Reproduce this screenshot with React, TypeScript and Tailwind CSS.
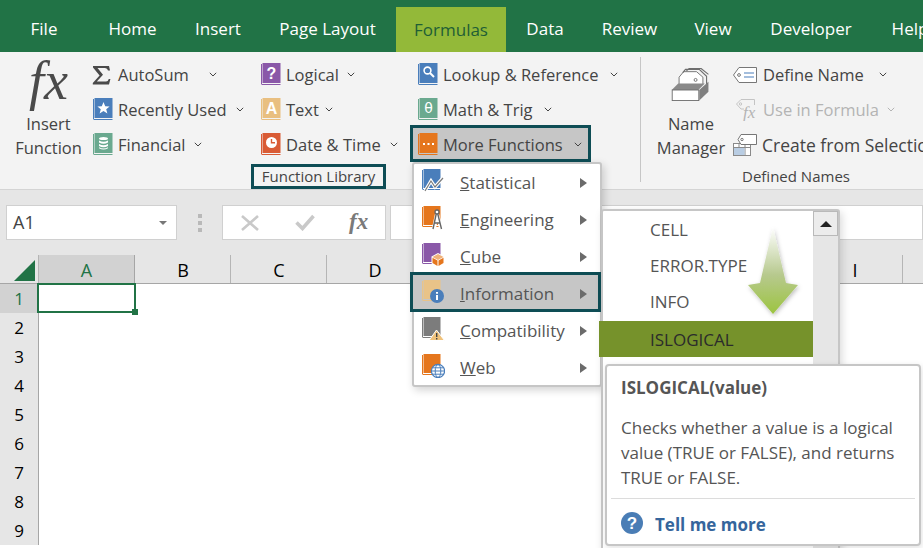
import React from 'react';

const TEAL = 'border-[#0e4d55]';

const tabs = [
  { label: 'File', w: 'w-[88px]' },
  { label: 'Home', w: 'w-[89px]' },
  { label: 'Insert', w: 'w-[82px]' },
  { label: 'Page Layout', w: 'w-[137px]' },
  { label: 'Formulas', w: 'w-[110px]', active: true },
  { label: 'Data', w: 'w-[78px]' },
  { label: 'Review', w: 'w-[91px]' },
  { label: 'View', w: 'w-[76px]' },
  { label: 'Developer', w: 'w-[120px]' },
  { label: 'Help', w: 'w-[78px]' },
];

const columns = ['B', 'C', 'D', 'E', 'F', 'G', 'H', 'I', 'J'];
const rows = [2, 3, 4, 5, 6, 7, 8, 9];

function Chevron({ className = '' }: { className?: string }) {
  return (
    <svg width="8" height="5" viewBox="0 0 8 5" className={`shrink-0 ${className}`}>
      <path d="M.8 .8 L4 4 L7.2 .8" fill="none" stroke="currentColor" strokeWidth="1" />
    </svg>
  );
}

// little book used by the function category buttons
function Book({ color, children }: { color: string; children?: React.ReactNode }) {
  return (
    <svg width="21" height="23" viewBox="0 0 21 23" className="shrink-0">
      <path d="M1.5 1 V21" stroke={color} strokeWidth="1" fill="none" />
      <rect x="2.5" y="0" width="18" height="20" fill={color} />
      <path d="M1.5 21.5 H20.5" stroke={color} strokeWidth="1" fill="none" />
      {children}
    </svg>
  );
}

function SigmaIcon() {
  return (
    <svg width="19" height="20" viewBox="0 0 19 20" className="shrink-0">
      <path d="M1 1 H17 L18 5.5 H16 Q15.5 3 13 3 H5.5 L11 9.8 L4.8 16.5 H14 Q16 16.5 16.8 14 H18.4 L17 19.5 H0.8 V18 L7.6 10.5 L1 2.4 Z" fill="#4a4a4a" />
    </svg>
  );
}

const iconText = 'font-[Liberation_Sans,sans-serif] font-bold';

const icons: Record<string, React.ReactNode> = {
  recent: (
    <Book color="#4a7ebb">
      <path d="M11.5 4 L13.2 8.2 L17.6 8.4 L14.2 11.2 L15.4 15.4 L11.5 13 L7.6 15.4 L8.8 11.2 L5.4 8.4 L9.8 8.2 Z" fill="#fff" />
    </Book>
  ),
  financial: (
    <Book color="#6aa98f">
      <ellipse cx="11.5" cy="5.5" rx="4.5" ry="1.6" fill="#fff" />
      <path d="M7 7.5 Q11.5 10 16 7.5 V9.5 Q11.5 12 7 9.5 Z M7 11 Q11.5 13.5 16 11 V13 Q11.5 15.5 7 13 Z M7 14.2 Q11.5 16.7 16 14.2 V15.2 Q11.5 17.7 7 15.2 Z" fill="#fff" />
    </Book>
  ),
  logical: (
    <Book color="#8a58a8">
      <text x="11.5" y="16" textAnchor="middle" fontSize="16" fill="#fff" className={iconText}>?</text>
    </Book>
  ),
  text: (
    <Book color="#e9bf80">
      <text x="11.5" y="16" textAnchor="middle" fontSize="16" fill="#fff" className={iconText}>A</text>
    </Book>
  ),
  date: (
    <Book color="#d95b35">
      <circle cx="11.5" cy="9.5" r="5.5" fill="#fff" />
      <path d="M11.5 6 V9.8 H15" fill="none" stroke="#d95b35" strokeWidth="1.4" />
    </Book>
  ),
  lookup: (
    <Book color="#4a7ebb">
      <circle cx="10.5" cy="7.5" r="3.4" fill="none" stroke="#fff" strokeWidth="1.6" />
      <path d="M13 10 L17 14" stroke="#fff" strokeWidth="2" />
    </Book>
  ),
  math: (
    <Book color="#6aa98f">
      <text x="11.5" y="15" textAnchor="middle" fontSize="14" fill="#fff" className="font-[DejaVu_Sans,sans-serif]">θ</text>
    </Book>
  ),
  more: (
    <Book color="#e5761d">
      <path d="M6 10 H8 V12 H6 Z M10.5 10 H12.5 V12 H10.5 Z M15 10 H17 V12 H15 Z" fill="#fff" />
    </Book>
  ),
};

function MenuIcon({ kind }: { kind: string }) {
  const color: Record<string, string> = {
    statistical: '#4a7ebb',
    engineering: '#e5761d',
    cube: '#8a58a8',
    information: '#e9c388',
    compatibility: '#7c7c7c',
    web: '#e5761d',
  };
  const c = color[kind];
  return (
    <svg width="24" height="24" viewBox="0 0 24 24" className="mt-[-3px] shrink-0">
      <path d="M1.5 1 V20" stroke={c} strokeWidth="1" fill="none" />
      <rect x="2.5" y="0" width="17" height="19" fill={c} />
      <path d="M1.5 20.5 H19" stroke={c} strokeWidth="1" fill="none" />
      {kind === 'statistical' && (
        <g fill="none">
          <path d="M4 22 L10 12 L14 18 L22 9" stroke="#fff" strokeWidth="3.4" />
          <path d="M4 22 L10 12 L14 18 L22 9" stroke="#7b7b7b" strokeWidth="1.2" />
        </g>
      )}
      {kind === 'engineering' && (
        <g fill="none">
          <path d="M13 22 L16 8 L20 22" stroke="#fff" strokeWidth="4" />
          <circle cx="16" cy="6" r="2" fill="#fff" stroke="#666" strokeWidth="1.3" />
          <path d="M15.2 8 L12 23 M16.8 8 L20.5 23 M13 17 H19.5" stroke="#666" strokeWidth="1.4" />
        </g>
      )}
      {kind === 'cube' && (
        <g>
          <path d="M17 10 L23.5 13.5 V20.5 L17 24 L10.5 20.5 V13.5 Z" fill="#fff" />
          <path d="M17 11 L22.5 14 L17 17 L11.5 14 Z" fill="#f0b27a" />
          <path d="M11.5 14.8 L16.5 17.6 V23 L11.5 20 Z M22.5 14.8 L17.5 17.6 V23 L22.5 20 Z" fill="#e5761d" />
        </g>
      )}
      {kind === 'information' && (
        <g>
          <circle cx="16" cy="16" r="7" fill="#4a7ebb" />
          <path d="M15 15 H17 V20 H15 Z M15 12 H17 V13.8 H15 Z" fill="#fff" />
        </g>
      )}
      {kind === 'compatibility' && (
        <g>
          <path d="M15.5 13 L23.5 23.5 H8 Z" fill="#f0c27b" stroke="#fff" strokeWidth="1" />
          <path d="M15 16 H16.4 V20 H15 Z M15 21 H16.4 V22.4 H15 Z" fill="#444" />
        </g>
      )}
      {kind === 'web' && (
        <g>
          <circle cx="17" cy="17" r="6.6" fill="#fff" stroke="#4a7ebb" strokeWidth="1.2" />
          <ellipse cx="17" cy="17" rx="2.8" ry="6.4" fill="none" stroke="#4a7ebb" strokeWidth="1" />
          <path d="M10.6 17 H23.4 M11.6 13.8 H22.4 M11.6 20.2 H22.4" stroke="#4a7ebb" strokeWidth="1" />
        </g>
      )}
    </svg>
  );
}

function RibbonRow({ icon, label, gap }: { icon: React.ReactNode; label: string; gap: string }) {
  return (
    <div className="flex h-[35px] items-center whitespace-nowrap">
      <span className="flex w-[26px] shrink-0 items-center">{icon}</span>
      <span className="pt-[1px]">{label}</span>
      <Chevron className={gap} />
    </div>
  );
}

const menuItems = [
  { kind: 'statistical', first: 'S', rest: 'tatistical' },
  { kind: 'engineering', first: 'E', rest: 'ngineering' },
  { kind: 'cube', first: 'C', rest: 'ube' },
  { kind: 'information', first: 'I', rest: 'nformation', active: true },
  { kind: 'compatibility', first: 'C', rest: 'ompatibility' },
  { kind: 'web', first: 'W', rest: 'eb' },
];

export default function App() {
  return (
    <div className="relative h-[548px] w-[923px] overflow-hidden bg-white font-[Open_Sans,sans-serif] text-[16.5px] text-[#444]">
      {/* tabs */}
      <div className="flex h-[52px] bg-[#217346] text-[17px] text-white">
        {tabs.map((tab) =>
          tab.active ? (
            <div key={tab.label} className={`${tab.w} mt-[7px] flex h-[45px] shrink-0 items-center justify-center bg-[#93b939] text-[#1f5e36]`}>
              {tab.label}
            </div>
          ) : (
            <div key={tab.label} className={`${tab.w} flex shrink-0 items-center justify-center pt-[6px]`}>
              {tab.label}
            </div>
          ),
        )}
      </div>

      {/* ribbon */}
      <div className="flex h-[138px] border-b border-[#d4d4d4] bg-[#f3f3f3]">
        <div className="flex w-[640px] shrink-0 flex-col items-center">
          <div className="flex h-[112px] w-full pt-[5px]">
            <div className="flex w-[92px] shrink-0 flex-col items-center pl-[5px]">
              <span className="mt-[-5px] h-[58px] font-[Liberation_Serif,serif] text-[54px] leading-[58px] text-[#4a4a4a] italic">fx</span>
              <span className="mt-[2px] text-center leading-[24px]">Insert<br />Function</span>
            </div>
            <div className="w-[168px] shrink-0">
              <RibbonRow icon={<SigmaIcon />} label="AutoSum" gap="ml-[20px]" />
              <RibbonRow icon={icons.recent} label="Recently Used" gap="ml-[9px]" />
              <RibbonRow icon={icons.financial} label="Financial" gap="ml-[8px]" />
            </div>
            <div className="w-[157px] shrink-0">
              <RibbonRow icon={icons.logical} label="Logical" gap="ml-[8px]" />
              <RibbonRow icon={icons.text} label="Text" gap="ml-[6px]" />
              <RibbonRow icon={icons.date} label="Date & Time" gap="ml-[9px]" />
            </div>
            <div className="flex-1">
              <RibbonRow icon={icons.lookup} label="Lookup & Reference" gap="ml-[11px]" />
              <RibbonRow icon={icons.math} label="Math & Trig" gap="ml-[11px]" />
              <div className="relative">
                <div className={`absolute top-[-2px] left-[-7px] h-[37px] w-[181px] border-3 bg-[#c6c6c6] ${TEAL}`} />
                <div className="relative">
                  <RibbonRow icon={icons.more} label="More Functions" gap="ml-[11px]" />
                </div>
              </div>
            </div>
          </div>
          <div className={`mr-[3px] flex h-[25px] w-[135px] items-center justify-center border-3 text-[15px] ${TEAL}`}>Function Library</div>
        </div>

        <div className="mt-[5px] h-[125px] w-px shrink-0 bg-[#c6c6c6]" />

        <div className="flex w-[310px] shrink-0 flex-col">
          <div className="flex h-[112px] pt-[5px]">
            <div className="flex w-[100px] shrink-0 flex-col items-center">
              <svg width="42" height="33" viewBox="0 0 44 36" className="mt-[11px]">
                <path d="M9 18 V10 L14 4 H28 L35 10 V18" fill="#fff" stroke="#6e6e6e" strokeWidth="1" />
                <path d="M13 5 L16 1.5 H31 L39 9 V18 M17 3 L20 0.5 H33 L41 7" fill="none" stroke="#6e6e6e" strokeWidth="1.2" />
                <circle cx="27" cy="13" r="1.6" fill="none" stroke="#6e6e6e" />
                <path d="M1 24 L8 17 H37 L30 24 Z" fill="#8a8a8a" />
                <rect x="1.5" y="24" width="29" height="11.5" fill="#fff" stroke="#6e6e6e" />
                <path d="M31 24 L41 15 V26 L31 35.5 Z" fill="#7f7f7f" />
              </svg>
              <span className="mt-[11px] text-center leading-[24px]">Name<br />Manager</span>
            </div>
            <div className="whitespace-nowrap">
              <div className="flex h-[35px] items-center">
                <svg width="24" height="16" viewBox="0 0 24 16" className="mr-[6px] ml-[-8px] shrink-0">
                  <path d="M6 .5 H23.5 V15.5 H6 L.5 8 Z" fill="#fff" stroke="#777" />
                  <circle cx="6" cy="8" r="1.4" fill="none" stroke="#777" />
                  <path d="M11 6 H21 M11 10 H21" stroke="#4a7ebb" strokeWidth="1.2" />
                </svg>
                <span className="pt-[1px]">Define Name</span>
                <Chevron className="ml-[15px]" />
              </div>
              <div className="flex h-[35px] items-center text-[#b4b4b4]">
                <svg width="21" height="22" viewBox="0 0 21 22" className="mr-[6px] ml-[-5px] shrink-0">
                  <path d="M5 .5 H18.5 V6 M5 .5 L.5 5 L5 10 H8" fill="none" stroke="#c4c4c4" />
                  <circle cx="4.5" cy="5" r="1.2" fill="none" stroke="#c4c4c4" />
                  <text x="7" y="19" fontSize="17" fill="#b4b4b4" className="font-[Liberation_Serif,serif] italic">fx</text>
                </svg>
                <span className="pt-[1px]">Use in Formula</span>
                <Chevron className="ml-[8px]" />
              </div>
              <div className="flex h-[35px] items-center">
                <svg width="24" height="22" viewBox="0 0 24 22" className="mr-[5px] ml-[-8px] shrink-0">
                  <rect x="0.5" y="9.5" width="17" height="12" fill="#fff" stroke="#8a8a8a" />
                  <path d="M.5 13.5 H17.5 M6 9.5 V21.5 M12 9.5 V21.5" stroke="#8a8a8a" />
                  <rect x="1" y="14" width="10.5" height="7" fill="#b9cde3" />
                  <path d="M8 .5 H23.5 V10.5 H8 L5 5.5 Z" fill="#fff" stroke="#777" />
                  <circle cx="9" cy="5.5" r="1.2" fill="none" stroke="#777" />
                </svg>
                <span className="pt-[1px] text-[17.5px]">Create from Selection</span>
              </div>
            </div>
          </div>
          <div className="flex h-[25px] items-center justify-center text-[15px]">Defined Names</div>
        </div>
      </div>

      {/* formula bar */}
      <div className="flex h-[65px] items-start bg-[#e6e6e6] pt-[15px] pl-[6px]">
        <div className="flex h-[35px] w-[171px] shrink-0 items-center justify-between border border-[#d0d0d0] bg-white pr-[9px] pl-[6px] text-[18px]">
          A1
          <span className="h-0 w-0 border-x-[4px] border-t-[4px] border-x-transparent border-t-[#777]" />
        </div>
        <div className="flex h-[35px] w-[45px] shrink-0 flex-col items-center justify-center gap-[3px]">
          <span className="size-[4px] bg-[#b9b9b9]" />
          <span className="size-[4px] bg-[#b9b9b9]" />
          <span className="size-[4px] bg-[#b9b9b9]" />
        </div>
        <div className="flex h-[35px] w-[164px] shrink-0 items-center border border-[#d0d0d0] bg-white">
          <svg width="18" height="16" viewBox="0 0 18 16" className="ml-[18px]">
            <path d="M1 1 L17 15 M17 1 L1 15" stroke="#c9c9c9" strokeWidth="2.6" />
          </svg>
          <svg width="20" height="17" viewBox="0 0 20 17" className="ml-[36px]">
            <path d="M1.5 8.5 L7.5 14.5 L18.5 2" fill="none" stroke="#c9c9c9" strokeWidth="3.6" />
          </svg>
          <span className="ml-[34px] font-[Liberation_Serif,serif] text-[23px] font-bold text-[#7a7a7a] italic">fx</span>
        </div>
        <div className="ml-[4px] h-[35px] flex-1 border border-[#d0d0d0] bg-white" />
      </div>

      {/* column headers */}
      <div className="flex h-[29px] border-b border-[#a6a6a6] bg-[#e6e6e6] text-[18px] text-black">
        <div className="flex w-[39px] shrink-0 items-center justify-center border-r border-[#b5b5b5] pl-[11px] pt-[2px]">
          <svg width="21" height="21" viewBox="0 0 21 21"><path d="M21 0 V21 H0 Z" fill="#217346" /></svg>
        </div>
        <div className="flex w-[96px] shrink-0 items-center justify-center border-r border-[#a6a6a6] bg-[#d2d2d2] pt-[2px] text-[#217346]">A</div>
        {columns.map((c) => (
          <div key={c} className="relative flex w-[96px] shrink-0 items-center justify-center pt-[2px]">
            {c}
            <span className="absolute top-0 right-0 bottom-0 w-px bg-[#b5b5b5]" />
          </div>
        ))}
      </div>

      {/* sheet */}
      <div className="text-[17px] text-black">
        <div className="flex h-[29px]">
          <div className="flex w-[39px] shrink-0 items-center justify-center border-r border-[#a6a6a6] bg-[#d2d2d2] pt-[1px] text-[#217346]">1</div>
          <div className="relative w-[96px] shrink-0">
            <div className="absolute top-[-1px] right-[-1px] bottom-0 left-[-2px] border-2 border-[#217346]" />
            <div className="absolute right-[-3px] bottom-[-2px] size-[6px] bg-[#217346]" />
          </div>
        </div>
        {rows.map((r) => (
          <div key={r} className="flex h-[29px]">
            <div className="flex w-[39px] shrink-0 items-center justify-center border-r border-[#a6a6a6] bg-[#e6e6e6] pt-[1px]">{r}</div>
          </div>
        ))}
      </div>

      {/* More Functions menu */}
      <div className="absolute top-[162px] left-[412px] h-[225px] w-[190px] rounded-[3px] border-2 border-[#c6c6c6] bg-white text-[17px] shadow-[2px_3px_8px_rgba(0,0,0,0.18)]">
        {menuItems.map((item) => (
          <div key={item.kind} className="relative flex h-[37px] items-center pl-[7px] text-[#555]">
            {item.active && <div className={`absolute top-[-3px] right-[-1px] left-[-4px] h-[40px] border-3 bg-[#c6c6c6] ${TEAL}`} />}
            <span className="relative flex w-[39px] shrink-0"><MenuIcon kind={item.kind} /></span>
            <span className="relative pt-[1px]"><u>{item.first}</u>{item.rest}</span>
            <span className="absolute top-[14px] right-[13px] h-0 w-0 border-y-[5px] border-l-[7px] border-y-transparent border-l-[#6b6b6b]" />
          </div>
        ))}
      </div>

      {/* Information submenu */}
      <div className="absolute top-[209px] left-[601px] flex h-[345px] w-[239px] rounded-[3px] border-2 border-[#c6c6c6] bg-white text-[17px] shadow-[2px_3px_8px_rgba(0,0,0,0.15)]">
        <div className="w-[210px] pt-[1px] text-[#555]">
          <div className="flex h-[36px] items-center pl-[47px]">CELL</div>
          <div className="flex h-[36px] items-center pl-[47px]">ERROR.TYPE</div>
          <div className="flex h-[36px] items-center pl-[47px]">INFO</div>
          <div className="ml-[-4px] mt-[1px] flex h-[36px] w-[214px] items-center bg-[#76922b] pt-[1px] pl-[51px] text-[#2b2b2b]">ISLOGICAL</div>
        </div>
        <div className="flex w-[25px] flex-col gap-[2px] bg-[#e6e6e6]">
          <div className="flex h-[25px] items-center justify-center border border-[#b9b9b9] bg-[#ececec]">
            <span className="h-0 w-0 border-x-[6px] border-b-[6px] border-x-transparent border-b-[#222]" />
          </div>
        </div>
      </div>

      {/* scroll hint arrow */}
      <svg width="60" height="96" viewBox="0 0 60 96" className="absolute top-[225px] left-[744px]">
        <defs>
          <linearGradient id="hint" x1="0" y1="0" x2="0" y2="1">
            <stop offset="0" stopColor="#ffffff" />
            <stop offset="0.55" stopColor="#b7c98e" />
            <stop offset="1" stopColor="#9cc440" />
          </linearGradient>
          <filter id="soft" x="-20%" y="-10%" width="140%" height="125%">
            <feDropShadow dx="1" dy="2" stdDeviation="2" floodColor="#000" floodOpacity="0.25" />
          </filter>
        </defs>
        <path d="M29 2 L42 58 L54 60 L29 89 L4 60 L16 58 Z" fill="url(#hint)" filter="url(#soft)" />
      </svg>

      {/* tooltip */}
      <div className="absolute top-[364px] left-[605px] flex h-[182px] w-[316px] flex-col rounded-[4px] border-2 border-[#c6c6c6] bg-white px-[4px] text-[#555] shadow-[1px_2px_6px_rgba(0,0,0,0.12)]">
        <div className="px-[10px] pt-[9px] text-[17px] leading-[25px] font-bold">ISLOGICAL(value)</div>
        <p className="mt-[15px] h-[75px] px-[10px] text-[17px] leading-[25px] whitespace-nowrap">
          Checks whether a value is a logical<br />value (TRUE or FALSE), and returns<br />TRUE or FALSE.
        </p>
        <div className="mt-[8px] flex flex-1 items-center border-t border-[#dcdcdc] px-[10px] pt-[3px]">
          <svg width="22" height="22" viewBox="0 0 22 22" className="shrink-0">
            <circle cx="11" cy="11" r="11" fill="#4a7db5" />
            <text x="11" y="17" textAnchor="middle" fontSize="17" fill="#fff" className={iconText}>?</text>
          </svg>
          <span className="ml-[12px] pt-[3px] text-[17px] font-bold text-[#35659c]">Tell me more</span>
        </div>
      </div>
    </div>
  );
}
